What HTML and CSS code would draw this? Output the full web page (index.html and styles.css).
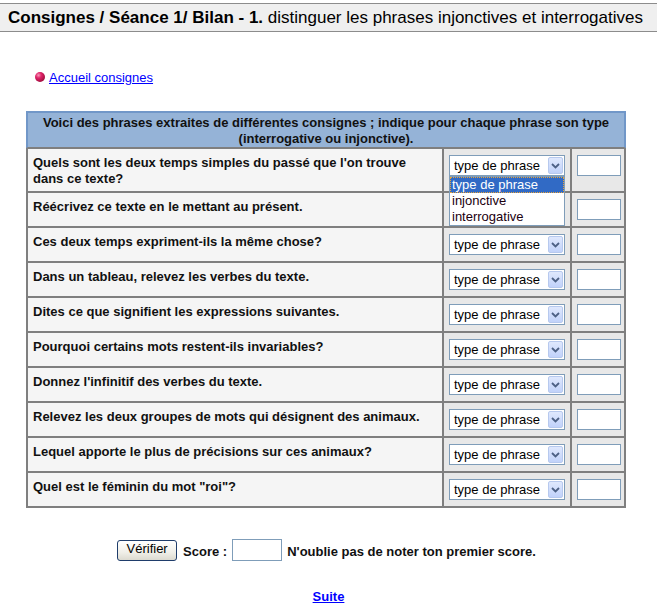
FILE: index.html
```html
<!DOCTYPE html>
<html lang="fr">
<head>
<meta charset="utf-8">
<title>Consignes / Séance 1/ Bilan</title>
<link rel="stylesheet" href="styles.css">
</head>
<body>
<div class="titlebar"><b>Consignes / Séance 1/ Bilan - 1.</b> distinguer les phrases injonctives et interrogatives</div>

<div class="home"><span class="bullet"></span><a href="#">Accueil consignes</a></div>

<table class="quiz">
  <colgroup><col class="c1"><col class="c2"><col class="c3"></colgroup>
  <thead>
    <tr><th colspan="3">Voici des phrases extraites de différentes consignes ; indique pour chaque phrase son type (interrogative ou injonctive).</th></tr>
  </thead>
  <tbody>
    <tr><td class="q">Quels sont les deux temps simples du passé que l'on trouve dans ce texte?</td>
      <td class="s"><div class="sel open"><span class="val">type de phrase</span><span class="arr"><svg width="9" height="6" viewBox="0 0 9 6"><path d="M1 1 L4.5 4.5 L8 1" fill="none" stroke="#4d6185" stroke-width="1.8"/></svg></span>
        <div class="list"><div class="opt on">type de phrase</div><div class="opt">injonctive</div><div class="opt">interrogative</div></div></div></td>
      <td class="r"><span class="box"></span></td></tr>
    <tr><td class="q">Réécrivez ce texte en le mettant au présent.</td><td class="s"><div class="sel covered"><span class="val">type de phrase</span><span class="arr"></span></div></td><td class="r"><span class="box"></span></td></tr>
    <tr><td class="q">Ces deux temps expriment-ils la même chose?</td><td class="s"><div class="sel"><span class="val">type de phrase</span><span class="arr"><svg width="9" height="6" viewBox="0 0 9 6"><path d="M1 1 L4.5 4.5 L8 1" fill="none" stroke="#4d6185" stroke-width="1.8"/></svg></span></div></td><td class="r"><span class="box"></span></td></tr>
    <tr><td class="q">Dans un tableau, relevez les verbes du texte.</td><td class="s"><div class="sel"><span class="val">type de phrase</span><span class="arr"><svg width="9" height="6" viewBox="0 0 9 6"><path d="M1 1 L4.5 4.5 L8 1" fill="none" stroke="#4d6185" stroke-width="1.8"/></svg></span></div></td><td class="r"><span class="box"></span></td></tr>
    <tr><td class="q">Dites ce que signifient les expressions suivantes.</td><td class="s"><div class="sel"><span class="val">type de phrase</span><span class="arr"><svg width="9" height="6" viewBox="0 0 9 6"><path d="M1 1 L4.5 4.5 L8 1" fill="none" stroke="#4d6185" stroke-width="1.8"/></svg></span></div></td><td class="r"><span class="box"></span></td></tr>
    <tr><td class="q">Pourquoi certains mots restent-ils invariables?</td><td class="s"><div class="sel"><span class="val">type de phrase</span><span class="arr"><svg width="9" height="6" viewBox="0 0 9 6"><path d="M1 1 L4.5 4.5 L8 1" fill="none" stroke="#4d6185" stroke-width="1.8"/></svg></span></div></td><td class="r"><span class="box"></span></td></tr>
    <tr><td class="q">Donnez l'infinitif des verbes du texte.</td><td class="s"><div class="sel"><span class="val">type de phrase</span><span class="arr"><svg width="9" height="6" viewBox="0 0 9 6"><path d="M1 1 L4.5 4.5 L8 1" fill="none" stroke="#4d6185" stroke-width="1.8"/></svg></span></div></td><td class="r"><span class="box"></span></td></tr>
    <tr><td class="q">Relevez les deux groupes de mots qui désignent des animaux.</td><td class="s"><div class="sel"><span class="val">type de phrase</span><span class="arr"><svg width="9" height="6" viewBox="0 0 9 6"><path d="M1 1 L4.5 4.5 L8 1" fill="none" stroke="#4d6185" stroke-width="1.8"/></svg></span></div></td><td class="r"><span class="box"></span></td></tr>
    <tr><td class="q">Lequel apporte le plus de précisions sur ces animaux?</td><td class="s"><div class="sel"><span class="val">type de phrase</span><span class="arr"><svg width="9" height="6" viewBox="0 0 9 6"><path d="M1 1 L4.5 4.5 L8 1" fill="none" stroke="#4d6185" stroke-width="1.8"/></svg></span></div></td><td class="r"><span class="box"></span></td></tr>
    <tr class="last"><td class="q">Quel est le féminin du mot "roi"?</td><td class="s"><div class="sel"><span class="val">type de phrase</span><span class="arr"><svg width="9" height="6" viewBox="0 0 9 6"><path d="M1 1 L4.5 4.5 L8 1" fill="none" stroke="#4d6185" stroke-width="1.8"/></svg></span></div></td><td class="r"><span class="box"></span></td></tr>
  </tbody>
</table>

<div class="actions">
  <span class="btn">Vérifier</span>
  <b class="lbl">Score :</b>
  <span class="score"></span>
  <b class="lbl">N'oublie pas de noter ton premier score.</b>
</div>

<div class="next"><a href="#">Suite</a></div>
</body>
</html>
```

FILE: styles.css
```css
html, body {
  margin: 0;
  padding: 0;
  background: #fff;
}
body {
  font-family: "Liberation Sans", Arial, sans-serif;
  font-size: 13px;
  color: #111;
}
.titlebar {
  margin-top: 3px;
  height: 27px;
  line-height: 27px;
  border-top: 1px solid #8c8c8c;
  border-bottom: 1px solid #8c8c8c;
  background: #efefef;
  padding-left: 8px;
  font-size: 17px;
  color: #000;
  white-space: nowrap;
  overflow: hidden;
}
.titlebar b { font-weight: bold; }
.home {
  margin: 37px 0 0 35px;
  display: flex;
  align-items: center;
  gap: 4px;
  height: 16px;
}
.bullet {
  width: 10px;
  height: 10px;
  border-radius: 50%;
  background: radial-gradient(circle at 35% 32%, #f79ab8 0, #e0246a 30%, #a80f42 70%, #6d0527 100%);
}
.home a {
  color: #0000ff;
  text-decoration: underline;
  font-size: 13px;
}
.quiz {
  margin: 26px 0 0 26px;
  width: 600px;
  table-layout: fixed;
  border-collapse: separate;
  border-spacing: 0;
}
.c1 { width: 417px; }
.c2 { width: 128px; }
.c3 { width: 55px; }
.quiz th {
  background: #95b3d7;
  border: 2px solid #7197c8;
  border-bottom: 1px solid #7f7f7f;
  padding: 2px 6px 0;
  line-height: 16px;
  font-weight: bold;
  font-size: 13px;
  color: #111;
  text-align: center;
}
.quiz td {
  border: 1px solid #7f7f7f;
  padding: 6px 5px 6px;
  vertical-align: top;
  line-height: 16px;
}
.quiz td.q {
  border-left-width: 2px;
  background: #f5f5f5;
  font-weight: bold;
  padding: 6px 5px 4px 5px;
}
.quiz td.s, .quiz td.r { background: #e8e8e8; }
.quiz td.r { border-right-width: 2px; }
.quiz tr.last td { border-bottom-width: 2px; }
.sel {
  position: relative;
  width: 116px;
  height: 21px;
  box-sizing: border-box;
  border: 1px solid #7f9db9;
  background: #fff;
  display: flex;
  align-items: center;
}
.sel.covered { visibility: hidden; }
.sel.open { visibility: visible; }
.val {
  padding-left: 4px;
  font-size: 13px;
  color: #000;
  white-space: nowrap;
}
.arr {
  position: absolute;
  right: 1px;
  top: 1px;
  width: 15px;
  height: 17px;
  box-sizing: border-box;
  border: 1px solid #b7c9ee;
  border-radius: 2px;
  background: linear-gradient(#dfe8fd, #c1d2fa);
  display: flex;
  align-items: center;
  justify-content: center;
}
.list {
  position: absolute;
  left: -1px;
  top: 20px;
  width: 116px;
  box-sizing: border-box;
  border: 1px solid #7f9db9;
  background: #fff;
  z-index: 5;
}
.opt {
  height: 16px;
  line-height: 16px;
  padding-left: 2px;
  font-size: 13px;
  color: #1b0010;
  box-sizing: border-box;
}
.opt.on {
  background: #316ac5;
  color: #fff;
  border: 1px dotted #e8a33a;
  line-height: 14px;
  padding-left: 1px;
}
.box {
  display: block;
  width: 44px;
  height: 21px;
  box-sizing: border-box;
  border: 1px solid #7f9db9;
  background: #fff;
}
.actions {
  margin-top: 31px;
  display: flex;
  justify-content: center;
  align-items: center;
  gap: 5px;
  padding-right: 4px;
}
.btn {
  width: 60px;
  height: 21px;
  box-sizing: border-box;
  border: 1px solid #1f3d6b;
  border-radius: 3px;
  background: linear-gradient(#ffffff, #f0efe8 60%, #dcdad0);
  font-size: 13px;
  color: #000;
  display: flex;
  align-items: center;
  justify-content: center;
  padding-bottom: 3px;
  margin-right: 1px;
}
.lbl {
  font-size: 13px;
  font-weight: bold;
  color: #111;
  position: relative;
  top: 1px;
}
.score {
  width: 50px;
  height: 22px;
  box-sizing: border-box;
  border: 1px solid #7f9db9;
  background: #fff;
}
.next {
  margin-top: 28px;
  text-align: center;
}
.next a {
  color: #0000ff;
  font-weight: bold;
  text-decoration: underline;
  font-size: 13px;
}
```
